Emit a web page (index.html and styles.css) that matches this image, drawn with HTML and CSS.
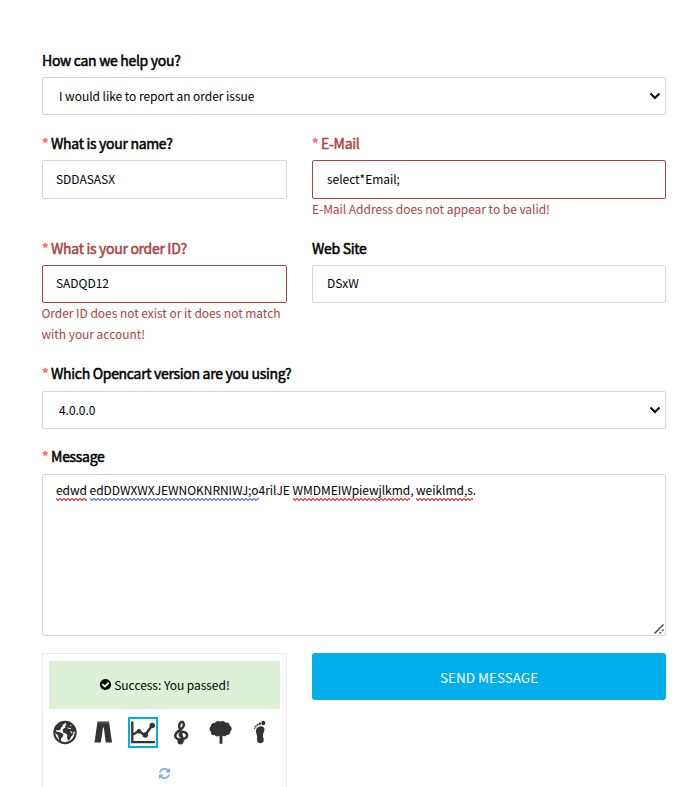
FILE: index.html
```html
<!DOCTYPE html>
<html lang="en">
<head>
<meta charset="utf-8">
<title>Contact</title>
<link rel="stylesheet" href="styles.css">
</head>
<body>
<form class="contact">
  <div class="group">
    <div class="label">How can we help you?</div>
    <div class="field select"><span>I would like to report an order issue</span><svg class="chev" viewBox="0 0 12 8"><path d="M1.500 1.500 6 6l4.500-4.500"/></svg></div>
  </div>
  <div class="row">
    <div class="group narrow">
      <div class="label"><i>*</i> What is your name?</div>
      <div class="field tall"><span>SDDASASX</span></div>
    </div>
    <div class="group wide error">
      <div class="label"><i>*</i> E-Mail</div>
      <div class="field tall"><span>select*Email;</span></div>
      <div class="help">E-Mail Address does not appear to be valid!</div>
    </div>
  </div>
  <div class="row ids">
    <div class="group narrow error">
      <div class="label"><i>*</i> What is your order ID?</div>
      <div class="field"><span>SADQD12</span></div>
      <div class="help">Order ID does not exist or it does not match<br>with your account!</div>
    </div>
    <div class="group wide">
      <div class="label">Web Site</div>
      <div class="field"><span>DSxW</span></div>
    </div>
  </div>
  <div class="group low">
    <div class="label"><i>*</i> Which Opencart version are you using?</div>
    <div class="field select"><span>4.0.0.0</span><svg class="chev" viewBox="0 0 12 8"><path d="M1.500 1.500 6 6l4.500-4.500"/></svg></div>
  </div>
  <div class="group low">
    <div class="label"><i>*</i> Message</div>
    <div class="field area"><div class="message"><span class="spell">edwd</span> <span class="grammar">edDDWXWXJEWNOKNRNIWJ;o</span>4rilJE <span class="spell">WMDMEIWpiewjlkmd</span>, <span class="spell">weiklmd,s</span>.</div>
      <svg class="grip" viewBox="0 0 10 10"><path d="M.5 9.500 9.500.5M5.500 9.500l1.500-1.500M8 7l1.500-1.500"/></svg></div>
  </div>
  <div class="row last">
    <div class="captcha narrow">
      <div class="passed"><svg viewBox="0 0 1792 1792"><path d="M1412 734q0-28-18-46l-91-90q-19-19-45-19t-45 19l-408 407-226-226q-19-19-45-19t-45 19l-91 90q-18 18-18 46 0 27 18 45l362 362q19 19 45 19 27 0 46-19l543-543q18-18 18-45zm252 162q0 209-103 385.500t-279.500 279.500-385.500 103-385.500-103-279.500-279.500-103-385.500 103-385.500 279.500-279.500 385.500-103 385.500 103 279.500 279.500 103 385.500z"/></svg><span>Success: You passed!</span></div>
      <div class="icons">
        <div class="icon"><svg viewBox="0 0 26 26"><circle cx="13" cy="13" r="10.700" fill="#fff" stroke="#333" stroke-width="2"/><path d="M2.500 10 4 7l3.500-3.500L12 2l1 1.500-1 1.500-1.500-.3.500 1.800-2 1.500-.5 2-2 1-2-.5-1 1L6 12.500l3 .5 2.500 2-1 2.500-1.500 1.500v3l-2-2-1-4-3-3zM15 2.500l4.500 2 3 4 .5 3.500-2 .5.500 2-2.500 3-1.500 3-1.500.5-1-3 .3-2.500-1.300-1.500-2.500-.7-1-2 1-2.300 2-1-.5-1.500 1.500-1-1-1z"/><path d="m15.500 8.500 2.500.5 1 .3M18.500 11.500l1.500 2.500M18 5.500l1.500 1" stroke="#fff" stroke-width=".9"/></svg></div>
        <div class="icon"><svg viewBox="0 0 26 26"><path d="M6.500 2h11.500l3 21h-6.200L12.800 8h-.8L9.800 23H3.500z"/><path d="M6.500 3.500h11.500" stroke="#777" stroke-width=".7"/></svg></div>
        <div class="icon chosen"><svg viewBox="0 0 26 26"><path d="M2.300 3v19.700H24" fill="none" stroke="#333" stroke-width="2.300" stroke-linecap="round"/><path d="m3 15 6-3.500 6 4.500 7-10" fill="none" stroke="#333" stroke-width="2.400"/><circle cx="9" cy="11.700" r="2.300"/><circle cx="15.300" cy="15.500" r="2.700"/><circle cx="22.200" cy="6" r="2.700"/></svg></div>
        <div class="icon"><svg viewBox="0 0 26 26"><path d="M14.300 22 10.300 7.500c-.6-3 1.200-5.300 3.200-5.300 2.500 2.500 1.500 5-1.300 7.300-3.200 2.300-6 4-6 6.800 0 3 3.500 4 6.800 3.600 3.700-.5 5.500-2.400 5-4.900-.6-3-5.800-3.700-7-.7-.5 1.500.2 2.500 1.500 3" fill="none" stroke="#333" stroke-width="2.500"/><circle cx="11.500" cy="22" r="3"/></svg></div>
        <div class="icon"><svg viewBox="0 0 26 26"><path d="M11.500 16c-1.500 1.500-4 1.200-4.800-.4C4.500 16.300 2.600 14.500 3 12.500 1.200 11 1.200 7.500 3 6.500c-.2-2.300 2-3.500 3.800-2.800C7.800 1.500 10.500 1 12 2.300c1.600-1.300 4.500-1 5.500 1 2-.8 4.300.6 4 2.800 2.600.8 2.900 4.600.9 6 .3 2-1.600 3.800-3.600 3.200-1 1.700-3.300 2-4.300.7l-.1 8.300h-2.900z"/></svg></div>
        <div class="icon"><svg viewBox="0 0 26 26"><path d="M9 10.500C9.500 6.500 17.500 5 17.500 10c-.2 2.700-1.700 4-1.500 6.500.2 2 1 3 .6 5-.5 2.700-5.700 2.900-6.400.2-.5-2 .4-4-.3-6-.4-1.700-1.200-3.400-.9-5.200z"/><ellipse cx="16.300" cy="3.500" rx="2" ry="2.200"/><circle cx="12.800" cy="4.300" r="1.200"/><circle cx="10.500" cy="5.500" r="1"/><circle cx="8.700" cy="7" r=".9"/><circle cx="7.600" cy="8.700" r=".8"/></svg></div>
      </div>
      <svg class="refresh" viewBox="0 0 1792 1792"><path d="M1639 1056q0 5-1 7-64 268-268 434.500t-478 166.500q-146 0-282.500-55t-243.500-157l-129 129q-19 19-45 19t-45-19-19-45v-448q0-26 19-45t45-19h448q26 0 45 19t19 45-19 45l-137 137q71 66 161 102t187 36q134 0 250-65t186-179q11-17 53-117 8-23 30-23h192q13 0 22.500 9.500t9.500 22.500zm25-800v448q0 26-19 45t-45 19h-448q-26 0-45-19t-19-45 19-45l138-138q-148-137-349-137-134 0-250 65t-186 179q-11 17-53 117-8 23-30 23h-199q-13 0-22.500-9.500t-9.500-22.500v-7q65-268 270-434.500t480-166.500q146 0 284 55.500t245 156.500l130-129q19-19 45-19t45 19 19 45z"/></svg>
    </div>
    <button class="send wide" type="button">SEND MESSAGE</button>
  </div>
</form>
</body>
</html>
```
FILE: styles.css
```css
* { box-sizing: border-box; }
html { overflow: hidden; background: #fff; }
body {
  margin: 0;
  height: 787px;
  overflow: hidden;
  font-family: "Noto Sans CJK SC", sans-serif;
  font-size: 12px;
  line-height: 21px;
  letter-spacing: -.04px;
  color: #000;
}
.contact { width: 624px; margin: 51px 0 0 42px; }
.row { display: flex; gap: 25px; }
.narrow { width: 245px; }
.wide { width: 354px; }
.group { padding-bottom: 19px; }
.label {
  height: 21px;
  margin-bottom: 5px;
  font-size: 14px;
  line-height: 19px;
  letter-spacing: -.3px;
  -webkit-text-stroke: .5px;
  white-space: nowrap;
}
.label i { font-style: normal; color: #f66; }
.field {
  display: flex;
  align-items: center;
  height: 38px;
  padding: 0 13px 2px;
  border: 1px solid #d5d5d5;
  border-radius: 2px;
  white-space: nowrap;
}
.tall { height: 39px; }
.ids .field { padding-bottom: 4px; }
.wide .field { padding-left: 14px; }
.select { justify-content: space-between; padding: 0 4px 2px 16px; }
.chev { width: 12px; height: 8px; margin-top: 2px; fill: none; stroke: #000; stroke-width: 2; }
.error { color: #a94442; }
.error .field { border-color: #a94442; }
.error .field span { color: #000; }
.help { height: 21px; margin: -1px 0 1px; white-space: nowrap; }
.narrow .help { height: 42px; margin-left: -.5px; }
.low { padding-bottom: 18px; }
.low .label { margin-bottom: 6px; }
.area {
  height: 162px;
  flex-direction: column;
  align-items: flex-start;
  justify-content: space-between;
  padding: 4px 1px 1px 13px;
}
.grip { align-self: flex-end; width: 10px; height: 10px; fill: none; stroke: #444; stroke-width: 1.400; }
.spell, .grammar { padding-bottom: 3px; background: left bottom / 4px 3px repeat-x; }
.spell { background-image: url("data:image/svg+xml,%3Csvg xmlns='http://www.w3.org/2000/svg' width='4' height='3'%3E%3Cpath d='M-1-.5 0 .5l2 2 2-2 1-1' fill='none' stroke='%23f33' stroke-width='1.200'/%3E%3C/svg%3E"); }
.grammar { background-image: url("data:image/svg+xml,%3Csvg xmlns='http://www.w3.org/2000/svg' width='4' height='3'%3E%3Cpath d='M-1-.5 0 .5l2 2 2-2 1-1' fill='none' stroke='%2357f' stroke-width='1.200'/%3E%3C/svg%3E"); }
.last { margin-top: -1px; }
.captcha {
  height: 160px;
  padding: 7px 6px;
  border: 1px solid #ebebeb;
}
.passed {
  display: flex;
  align-items: center;
  justify-content: center;
  gap: 2px;
  height: 48px;
  padding-bottom: 2px;
  background: #dff0d8;
}
.passed svg { width: 13px; height: 13px; }
.icons { display: flex; gap: 9px; margin: 8px 0 0 1px; }
.icon { display: flex; width: 30px; height: 31px; padding: 2px; }
.icon svg { width: 26px; height: 27px; fill: #333; }
.chosen { border: 2px solid #00aeeb; padding: 0; }
.refresh { display: block; width: 13px; height: 13px; margin: 19px auto 0; fill: #77aee5; }
.send {
  height: 47px;
  padding: 0;
  border: 0;
  border-radius: 3px;
  background: #00aeeb;
  color: #fff;
  font: 13.500px/46px "Noto Sans CJK SC", sans-serif;
}
```
